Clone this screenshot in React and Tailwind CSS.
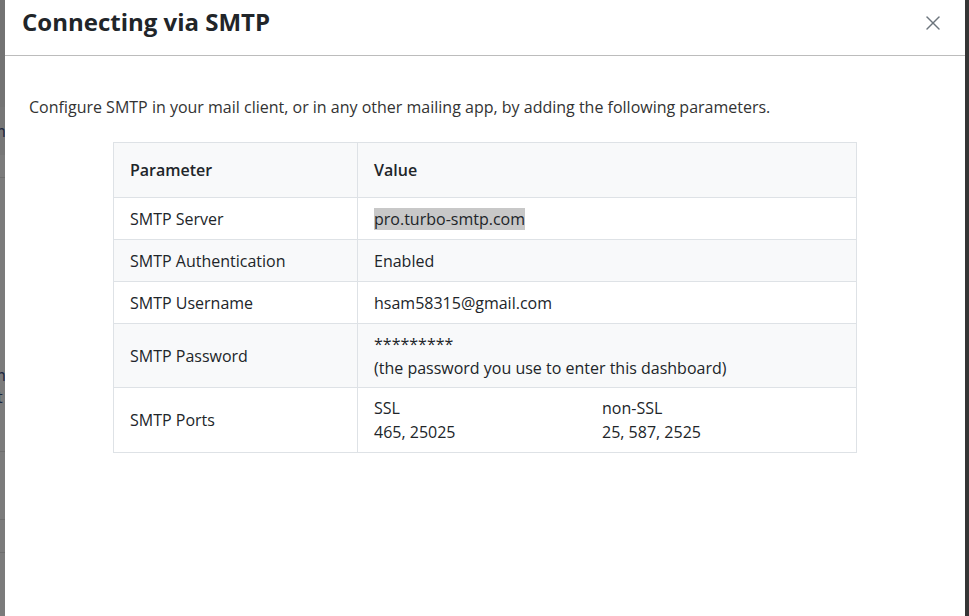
import { X } from "lucide-react";

const rows = [
  { label: "SMTP Server", striped: false },
  { label: "SMTP Authentication", striped: true },
  { label: "SMTP Username", striped: false },
  { label: "SMTP Password", striped: true },
  { label: "SMTP Ports", striped: false },
];

function Value({ index }) {
  if (index === 0) return <span className="bg-[#c8c8c8]">pro.turbo-smtp.com</span>;
  if (index === 1) return <span>Enabled</span>;
  if (index === 2) return <span>hsam58315@gmail.com</span>;
  if (index === 3)
    return (
      <div className="pt-[1px]">
        <div>*********</div>
        <div>(the password you use to enter this dashboard)</div>
      </div>
    );
  return (
    <div className="grid grid-cols-[228px_1fr]">
      <div>
        <div>SSL</div>
        <div>465, 25025</div>
      </div>
      <div>
        <div>non-SSL</div>
        <div>25, 587, 2525</div>
      </div>
    </div>
  );
}

export default function App() {
  return (
    <div className="flex h-[616px] w-[969px] overflow-hidden bg-[#7a7a7a] font-['Open_Sans',sans-serif] text-[#212529]">
      {/* page behind the overlay */}
      <div className="w-[5px] shrink-0 overflow-hidden bg-[#7b7b7b] text-[16px] text-[#1a2540]">
        <div className="h-[107px] bg-[#737373]" />
        <div className="flex h-[48px] items-center bg-[#767676] leading-[20px]">
          <span className="-ml-[9px]">m</span>
        </div>
        <div className="h-[23px] border-b border-[#6e6e6e]" />
        <div className="mt-[164px] leading-[22px]">
          <div className="-ml-[8px]">v</div>
          <div className="-ml-[9px]">m</div>
          <div className="-ml-[3px]">t</div>
        </div>
        <div className="mt-[43px] h-[68px] border-t border-[#6e6e6e]" />
        <div className="h-[33px] border-t border-[#6e6e6e]" />
        <div className="border-t border-[#6e6e6e]" />
      </div>

      <div className="flex w-[960px] shrink-0 flex-col bg-white">
        <div className="flex h-[56px] items-start justify-between border-b border-[#bcbcbc] pl-[17px] pr-[20px]">
          <h2 className="pt-[6px] text-[24px] font-bold leading-[32px] text-[#212529]">Connecting via SMTP</h2>
          <button type="button" className="mt-[11px] text-[#6c757d]">
            <X size={24} strokeWidth={1.4} />
          </button>
        </div>

        <div className="px-[24px] pt-[38px]">
          <p className="pt-[1px] text-[16px] leading-[24px] text-[#333]">
            Configure SMTP in your mail client, or in any other mailing app, by adding the following parameters.
          </p>

          <div className="ml-[84px] mt-[23px] w-[744px] border border-[#dee2e6] text-[16px] leading-[24px]">
            <div className="flex h-[55px] border-b border-[#dee2e6] bg-[#f8f9fa] font-semibold">
              <div className="flex w-[244px] items-center border-r border-[#dee2e6] px-[16px]">Parameter</div>
              <div className="flex flex-1 items-center px-[16px]">Value</div>
            </div>
            {rows.map((row, i) => (
              <div
                key={row.label}
                className={`flex ${i < 3 ? "h-[42px]" : "h-[64px]"} ${i < rows.length - 1 ? "border-b border-[#dee2e6]" : ""} ${row.striped ? "bg-[#f8f9fa]" : "bg-white"}`}
              >
                <div className="flex w-[244px] items-center border-r border-[#dee2e6] px-[16px]">{row.label}</div>
                <div className="flex-1 self-center px-[16px]">
                  <Value index={i} />
                </div>
              </div>
            ))}
          </div>
        </div>
      </div>

      <div className="w-[4px] shrink-0 bg-[#353535]" />
    </div>
  );
}
